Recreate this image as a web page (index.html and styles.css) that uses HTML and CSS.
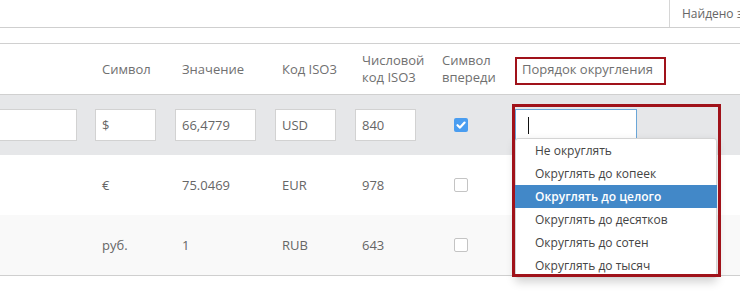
FILE: index.html
```html
<!DOCTYPE html>
<html lang="ru">
<head>
<meta charset="utf-8">
<link rel="stylesheet" href="styles.css">
</head>
<body>
<div class="topbar">
  <div class="topbar-left"></div>
  <div class="found">Найдено записей: 3</div>
</div>
<div class="spacer"></div>
<div class="grid">
  <div class="row head">
    <div class="cell"></div>
    <div class="cell">Символ</div>
    <div class="cell">Значение</div>
    <div class="cell">Код ISO3</div>
    <div class="cell two">Числовой<br>код ISO3</div>
    <div class="cell two">Символ<br>впереди</div>
    <div class="cell rel">Порядок округления<div class="mark mark-head"></div></div>
  </div>
  <div class="row edit">
    <div class="cell"><div class="inp inp-first"></div></div>
    <div class="cell"><div class="inp">$</div></div>
    <div class="cell"><div class="inp inp-wide">66,4779</div></div>
    <div class="cell"><div class="inp">USD</div></div>
    <div class="cell"><div class="inp">840</div></div>
    <div class="cell"><span class="cb checked"><svg viewBox="0 0 14 14" width="14" height="14"><path d="M3.5 7.2 L6 9.6 L10.6 4.6" fill="none" stroke="#fff" stroke-width="2.2" stroke-linecap="round" stroke-linejoin="round"/></svg></span></div>
    <div class="cell rel">
      <div class="inp sel"><span class="caret"></span></div>
      <ul class="menu">
        <li>Не округлять</li>
        <li>Округлять до копеек</li>
        <li class="active">Округлять до целого</li>
        <li>Округлять до десятков</li>
        <li>Округлять до сотен</li>
        <li>Округлять до тысяч</li>
      </ul>
      <div class="mark mark-menu"></div>
    </div>
  </div>
  <div class="row">
    <div class="cell"></div>
    <div class="cell txt">€</div>
    <div class="cell txt">75.0469</div>
    <div class="cell txt">EUR</div>
    <div class="cell txt">978</div>
    <div class="cell"><span class="cb"></span></div>
    <div class="cell"></div>
  </div>
  <div class="row odd last">
    <div class="cell"></div>
    <div class="cell txt">руб.</div>
    <div class="cell txt">1</div>
    <div class="cell txt">RUB</div>
    <div class="cell txt">643</div>
    <div class="cell"><span class="cb"></span></div>
    <div class="cell"></div>
  </div>
</div>
</body>
</html>
```
FILE: styles.css
```css
html, body {
  margin: 0;
  padding: 0;
  overflow: hidden;
  background: #fff;
}
body {
  width: 740px;
  height: 299px;
  font-family: "Open Sans", "Liberation Sans", sans-serif;
  font-size: 13px;
  color: #707070;
}
.topbar {
  display: flex;
  height: 27px;
  border-bottom: 1px solid #cfcfcf;
  white-space: nowrap;
  overflow: hidden;
}
.topbar-left {
  width: 669px;
  flex: none;
  border-right: 1px solid #d6d6d6;
}
.found {
  padding-left: 12px;
  line-height: 27px;
  font-size: 12px;
  color: #666;
}
.spacer {
  height: 15px;
  border-bottom: 1px solid #d0d0d0;
}
.grid {
  margin-left: -120px;
}
.row {
  display: grid;
  grid-template-columns: 215px 80px 100px 80px 80px 80px 260px;
  height: 60px;
  align-items: center;
  background: #fff;
}
.row.head {
  height: 50px;
  border-bottom: 1px solid #d0d0d0;
}
.row.edit {
  background: #e6e7e9;
}
.row.odd {
  background: #f9f9f9;
}
.row.last {
  border-bottom: 1px solid #cfcfcf;
}
.cell {
  height: 100%;
  display: flex;
  align-items: center;
  box-sizing: border-box;
  white-space: nowrap;
}
.head .cell {
  padding-left: 7px;
  color: #707070;
}
.head .cell.two {
  line-height: 17px;
}
.cell.txt {
  padding-left: 7px;
  color: #666;
}
.rel {
  position: relative;
}
.inp {
  box-sizing: border-box;
  width: 61px;
  height: 32px;
  margin-top: -1px;
  background: #fff;
  border: 1px solid #d2d2d2;
  padding-left: 6px;
  line-height: 30px;
  color: #666;
}
.inp-wide {
  width: 81px;
}
.inp-first {
  width: 197px;
}
.inp.sel {
  width: 122px;
  height: 33px;
  margin-top: 0;
  border-color: #6aa6d8;
  display: flex;
  align-items: center;
  padding-left: 12px;
}
.caret {
  display: block;
  width: 1px;
  height: 17px;
  background: #111;
}
.cb {
  display: block;
  box-sizing: border-box;
  width: 14px;
  height: 14px;
  margin-left: 19px;
  margin-top: -1px;
  border: 1px solid #c4c4c4;
  border-radius: 2px;
  background: #fff;
}
.cb.checked {
  border: none;
  background: #4a9df0;
}
.cb svg {
  display: block;
}
.menu {
  position: absolute;
  left: 0;
  top: 43px;
  width: 202px;
  margin: 0;
  padding: 0;
  list-style: none;
  background: #fff;
  border: 1px solid #d4d4d4;
  border-radius: 3px;
  box-sizing: border-box;
  box-shadow: 0 4px 10px rgba(0, 0, 0, 0.18);
  z-index: 2;
  font-size: 12px;
}
.menu li {
  height: 23px;
  line-height: 23px;
  padding-left: 19px;
  color: #444;
}
.menu li.active {
  background: #4288c8;
  color: #fff;
  font-weight: 600;
  margin: 0 -1px;
  padding-left: 20px;
}
.mark {
  position: absolute;
  box-sizing: border-box;
  border-style: solid;
  border-color: #a0121a;
  z-index: 3;
  pointer-events: none;
}
.mark-head {
  left: 0;
  top: 13px;
  width: 151px;
  height: 28px;
  border-width: 2px;
}
.mark-menu {
  left: -3px;
  top: 9px;
  width: 209px;
  height: 173px;
  border-width: 3px;
}
```
